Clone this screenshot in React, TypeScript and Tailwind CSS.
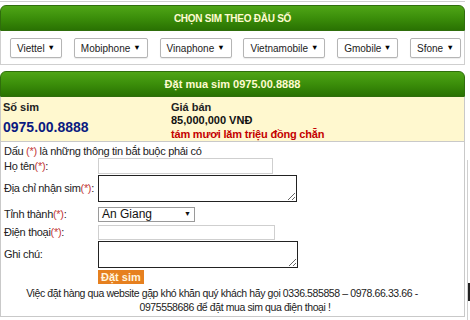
import { ReactNode } from "react";

const networks = [
  { name: "Viettel", w: "w-[52px]" },
  { name: "Mobiphone", w: "w-[74px]" },
  { name: "Vinaphone", w: "w-[72px]" },
  { name: "Vietnamobile", w: "w-[82px]" },
  { name: "Gmobile", w: "w-[61px]" },
  { name: "Sfone", w: "w-[51px]" },
];

function FakeSelect({ label, className }: { label: string; className?: string }) {
  return (
    <div
      className={
        "flex items-center justify-between h-[20px] border border-[#b5b5b5] rounded-[2px] bg-white pl-[6px] pr-[6px] text-[10px] text-[#222] shadow-[0_1px_1px_rgba(0,0,0,0.08)] " +
        (className ?? "")
      }
    >
      <span>{label}</span>
      <span className="text-[7.5px] text-black">▼</span>
    </div>
  );
}

function GreenBar({ children }: { children: ReactNode }) {
  return (
    <div className="h-[26px] rounded-t-[6px] border border-[#2f6e0c] bg-gradient-to-b from-[#4fa516] via-[#3b8e0a] to-[#2a7203] flex items-center justify-center text-[#fffbd0] font-bold">
      {children}
    </div>
  );
}

function Label({ text, req = true }: { text: string; req?: boolean }) {
  return (
    <span className="text-[11px] tracking-[-0.3px] text-[#222] whitespace-nowrap">
      {text}
      {req && <span className="text-[#c43a3a]">(*)</span>}:
    </span>
  );
}

export default function App() {
  return (
    <div className="relative w-[470px] h-[320px] bg-white overflow-hidden font-['Liberation_Sans',Tahoma,sans-serif]">
      <div className="w-[465px] h-[1px] bg-[#cfcfcf] mt-[1px]" />

      {/* chọn sim theo đầu số */}
      <div className="w-[465px] mt-[3px]">
        <GreenBar>
          <span className="text-[10px] tracking-tight">CHỌN SIM THEO ĐẦU SỐ</span>
        </GreenBar>
        <div className="h-[34px] border border-t-0 border-[#cfcfcf] flex items-center justify-between pl-[9px] pr-[3px] pt-[1px]">
          {networks.map((n) => (
            <FakeSelect key={n.name} label={n.name} className={n.w} />
          ))}
        </div>
      </div>

      {/* đặt mua sim */}
      <div className="w-[465px] mt-[6px]">
        <GreenBar>
          <span className="text-[11px]">Đặt mua sim 0975.00.8888</span>
        </GreenBar>
        <div className="bg-[#fff8cf] border border-t-0 border-[#c9c9c9] h-[45px] flex pl-[2px] pt-[3px]">
          <div className="w-[168px]">
            <div className="text-[11px] font-bold text-[#222] leading-[14px]">Số sim</div>
            <div className="text-[14px] font-bold text-[#0a1a80] mt-[5px] leading-[16px]">0975.00.8888</div>
          </div>
          <div>
            <div className="text-[11px] font-bold text-[#222] leading-[14px]">Giá bán</div>
            <div className="text-[11px] font-bold text-[#111] leading-[13px]">85,000,000 VNĐ</div>
            <div className="text-[11px] font-bold text-[#c40000] tracking-[-0.2px] leading-[15px]">tám mươi lăm triệu đồng chẵn</div>
          </div>
        </div>

        <div className="border border-t-0 border-[#c9c9c9] h-[175px] pl-[3px] pt-[3px]">
          <div className="text-[11px] tracking-[-0.3px] text-[#222] leading-[12px] h-[12px]">
            Dấu <span className="text-[#c43a3a]">(*)</span> là những thông tin bắt buộc phải có
          </div>

          <div className="grid grid-cols-[94px_1fr] items-center mt-[1px] h-[16px]">
            <Label text="Họ tên" />
            <input className="w-[175px] h-[16px] border border-[#cfcfcf] outline-none" readOnly />
          </div>

          <div className="grid grid-cols-[94px_1fr] items-center mt-[1px] h-[27px]">
            <Label text="Địa chỉ nhận sim" />
            <textarea className="w-[199px] h-[27px] border border-[#222] outline-none block" readOnly />
          </div>

          <div className="grid grid-cols-[94px_1fr] items-center mt-[4px] h-[15px]">
            <Label text="Tỉnh thành" />
            <div className="w-[97px] h-[15px] border border-[#9a9a9a] flex items-center justify-between px-[3px] text-[12px] text-[#111]">
              <span>An Giang</span>
              <span className="text-[7px]">▼</span>
            </div>
          </div>

          <div className="grid grid-cols-[94px_1fr] items-center mt-[3px] h-[15px]">
            <Label text="Điện thoại" />
            <input className="w-[177px] h-[15px] border border-[#cfcfcf] outline-none" readOnly />
          </div>

          <div className="grid grid-cols-[94px_1fr] items-center mt-[2px] h-[27px]">
            <span className="text-[11px] tracking-[-0.3px] text-[#222]">Ghi chú:</span>
            <textarea className="w-[200px] h-[27px] border border-[#222] outline-none block" readOnly />
          </div>

          <div className="flex pl-[94px] mt-[2px] h-[14px]">
            <span className="flex items-center h-[14px] bg-[#e6801f] text-[#fff3dc] text-[11px] font-bold px-[3px]">Đặt sim</span>
          </div>

          <div className="text-[10.5px] tracking-[-0.4px] text-[#222] leading-[14px] mt-[2px] whitespace-nowrap">
            <div className="text-center pr-[24px]">
              Việc đặt hàng qua website gặp khó khăn quý khách hãy gọi 0336.585858 – 0978.66.33.66 -
            </div>
            <div className="text-center pl-[2px]">0975558686 để đặt mua sim qua điện thoại !</div>
          </div>
        </div>
      </div>

      {/* cạnh phải */}
      <div className="absolute left-[467px] top-[160px] w-[1px] h-[160px] bg-[#cfcfcf]" />
      <div className="absolute left-[468px] top-[283px] w-[2px] h-[18px] bg-[#222]" />
    </div>
  );
}
